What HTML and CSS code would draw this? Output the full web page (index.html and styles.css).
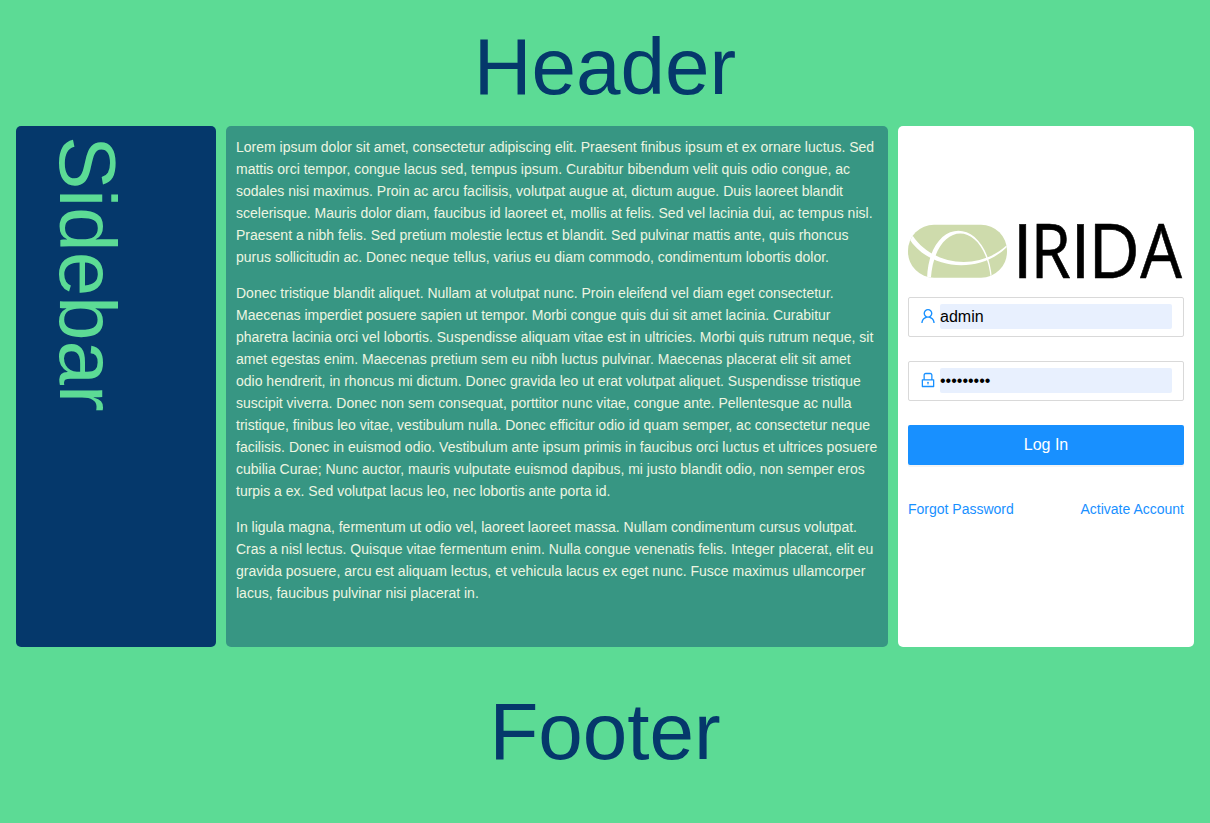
FILE: index.html
```html
<!DOCTYPE html>
<html lang="en">
<head>
<meta charset="utf-8">
<title>IRIDA Login</title>
<link rel="stylesheet" href="styles.css">
</head>
<body>
<div class="page">
  <header class="banner header">Header</header>
  <aside class="sidebar"><div class="sidebar-text">Sidebar</div></aside>
  <main class="content">
    <p>Lorem ipsum dolor sit amet, consectetur adipiscing elit. Praesent finibus ipsum et ex ornare luctus. Sed mattis orci tempor, congue lacus sed, tempus ipsum. Curabitur bibendum velit quis odio congue, ac sodales nisi maximus. Proin ac arcu facilisis, volutpat augue at, dictum augue. Duis laoreet blandit scelerisque. Mauris dolor diam, faucibus id laoreet et, mollis at felis. Sed vel lacinia dui, ac tempus nisl. Praesent a nibh felis. Sed pretium molestie lectus et blandit. Sed pulvinar mattis ante, quis rhoncus purus sollicitudin ac. Donec neque tellus, varius eu diam commodo, condimentum lobortis dolor.</p>
    <p>Donec tristique blandit aliquet. Nullam at volutpat nunc. Proin eleifend vel diam eget consectetur. Maecenas imperdiet posuere sapien ut tempor. Morbi congue quis dui sit amet lacinia. Curabitur pharetra lacinia orci vel lobortis. Suspendisse aliquam vitae est in ultricies. Morbi quis rutrum neque, sit amet egestas enim. Maecenas pretium sem eu nibh luctus pulvinar. Maecenas placerat elit sit amet odio hendrerit, in rhoncus mi dictum. Donec gravida leo ut erat volutpat aliquet. Suspendisse tristique suscipit viverra. Donec non sem consequat, porttitor nunc vitae, congue ante. Pellentesque ac nulla tristique, finibus leo vitae, vestibulum nulla. Donec efficitur odio id quam semper, ac consectetur neque facilisis. Donec in euismod odio. Vestibulum ante ipsum primis in faucibus orci luctus et ultrices posuere cubilia Curae; Nunc auctor, mauris vulputate euismod dapibus, mi justo blandit odio, non semper eros turpis a ex. Sed volutpat lacus leo, nec lobortis ante porta id.</p>
    <p>In ligula magna, fermentum ut odio vel, laoreet laoreet massa. Nullam condimentum cursus volutpat. Cras a nisl lectus. Quisque vitae fermentum enim. Nulla congue venenatis felis. Integer placerat, elit eu gravida posuere, arcu est aliquam lectus, et vehicula lacus ex eget nunc. Fusce maximus ullamcorper lacus, faucibus pulvinar nisi placerat in.</p>
  </main>
  <section class="login">
    <svg class="logo" viewBox="0 0 276 60" role="img" aria-label="IRIDA">
      <defs><clipPath id="pill"><rect x="0" y="2.700" width="99" height="53" rx="26"/></clipPath></defs>
      <g clip-path="url(#pill)">
        <rect class="logo-pill" width="99" height="60"/>
        <path class="logo-line" d="M-2 6 L1 8 L4.700 13.700 C24 43 70 50 99 23 L99 25 C70 53.500 20 47 1 16.500 Z"/>
        <path class="logo-line" d="M19 57 C21 -7.400 79 -7.400 84 57 L82.800 57 C77 -3.700 27 -3.700 22.800 57 Z"/>
      </g>
      <g class="logo-text">
        <text transform="translate(104.300 55.500)">I</text>
        <text transform="translate(122.600 55.500) scale(.87 1)">R</text>
        <text transform="translate(162.100 55.500)">I</text>
        <text transform="translate(180.300 55.500) scale(.95 1)">D</text>
        <text transform="translate(232.200 55.500) scale(.88 1)">A</text>
      </g>
    </svg>
    <form class="form">
      <label class="field">
        <svg class="icon" viewBox="64 64 896 896"><path d="M858.500 763.600a374 374 0 0 0-80.600-119.500 375.630 375.630 0 0 0-119.500-80.600c-.4-.2-.8-.3-1.200-.5C719.500 518 760 444.700 760 362c0-137-111-248-248-248S264 225 264 362c0 82.700 40.500 156 102.800 201.100-.4.2-.8.3-1.200.5-44.800 18.900-85 46-119.500 80.600a375.630 375.630 0 0 0-80.600 119.500A371.700 371.700 0 0 0 136 901.800a8 8 0 0 0 8 8.200h60c4.400 0 7.900-3.500 8-7.800 2-77.200 33-149.500 87.800-204.300 56.700-56.700 132-87.900 212.200-87.900s155.500 31.200 212.200 87.900C779 752.700 810 825 812 902.200c.1 4.400 3.600 7.800 8 7.800h60a8 8 0 0 0 8-8.200c-1-47.800-10.900-94.300-29.500-138.200zM512 534c-45.900 0-89.100-17.900-121.600-50.400S340 407.900 340 362c0-45.900 17.900-89.100 50.400-121.600S466.100 190 512 190s89.100 17.900 121.600 50.400S684 316.100 684 362c0 45.900-17.900 89.100-50.400 121.600S557.900 534 512 534z"/></svg>
        <input class="input" type="text" value="admin" aria-label="Username">
      </label>
      <label class="field">
        <svg class="icon" viewBox="64 64 896 896"><path d="M832 464h-68V240c0-70.700-57.300-128-128-128H388c-70.700 0-128 57.300-128 128v224h-68c-17.700 0-32 14.300-32 32v384c0 17.700 14.300 32 32 32h640c17.700 0 32-14.300 32-32V496c0-17.700-14.300-32-32-32zM332 240c0-30.900 25.100-56 56-56h248c30.900 0 56 25.100 56 56v224H332V240zm460 600H232V536h560v304zM484 701v53c0 4.400 3.600 8 8 8h40c4.400 0 8-3.600 8-8v-53a48.010 48.010 0 1 0-56 0z"/></svg>
        <input class="input" type="password" value="password1" aria-label="Password">
      </label>
      <button class="submit" type="button">Log In</button>
    </form>
    <nav class="links"><a>Forgot Password</a><a>Activate Account</a></nav>
  </section>
  <footer class="banner footer">Footer</footer>
</div>
</body>
</html>
```

FILE: styles.css
```css
* { box-sizing: border-box; }
body {
  margin: 0;
  background: #5cdb95;
  font: 14px/22px "Liberation Sans", Arial, sans-serif;
}
.page {
  display: grid;
  grid-template: 126px 521px 176px / 200px 1fr 296px;
  column-gap: 10px;
  height: 823px;
  padding: 0 16px;
}
.banner {
  grid-column: 1 / -1;
  color: #05386b;
  font-size: 80px;
  line-height: 92px;
  text-align: center;
}
.header { padding-top: 21px; }
.footer { padding-top: 39px; }
.sidebar, .content, .login { border-radius: 5px; padding: 10px; }
.sidebar { background: #05386b; }
.sidebar-text {
  writing-mode: vertical-rl;
  color: #5cdb95;
  font-size: 80px;
  line-height: 123px;
}
.content { background: #379683; color: #edf5e1; }
.content p { margin: 0 0 14px; }
.login { background: #fff; padding-top: 96px; }
.logo { display: block; width: 276px; height: 60px; overflow: visible; }
.logo-pill { fill: #cedbac; }
.logo-line { fill: #fff; }
.logo-text {
  font: 75px "Open Sans", "Noto Sans", sans-serif;
  fill: #000;
  stroke: #000;
  stroke-width: .6px;
}
.form { display: flex; flex-direction: column; gap: 24px; padding-top: 15px; }
.field {
  display: flex;
  align-items: center;
  height: 40px;
  padding: 0 11px 1px;
  border: 1px solid #d9d9d9;
  border-radius: 2px;
}
.icon { width: 16px; height: 16px; margin: 0 4px 1px 0; fill: #1890ff; }
.input {
  flex: 1;
  min-width: 0;
  height: 25px;
  margin: 0;
  padding: 1px 0 0;
  border: 0;
  border-radius: 2px;
  outline: 0;
  background: #e8f0fe;
  color: #000;
  font: 16px "Liberation Sans", Arial, sans-serif;
}
.submit {
  height: 40px;
  border: 0;
  border-radius: 2px;
  background: #1890ff;
  box-shadow: 0 2px 0 rgba(0, 0, 0, .045);
  color: #fff;
  font: 16px "Liberation Sans", Arial, sans-serif;
}
.links { display: flex; justify-content: space-between; padding-top: 33px; color: #1890ff; }
```
